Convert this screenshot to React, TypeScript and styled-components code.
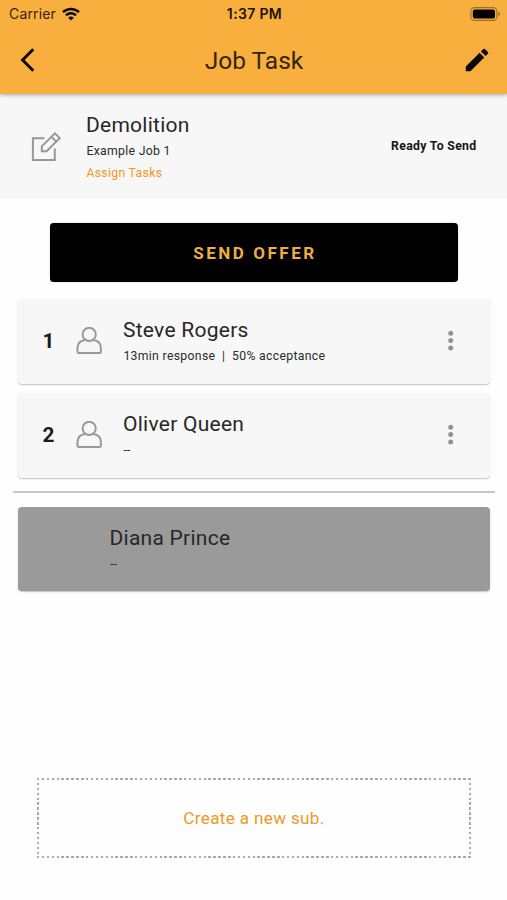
import React from 'react';
import styled, { createGlobalStyle } from 'styled-components';

const GlobalStyle = createGlobalStyle`
  * { box-sizing: border-box; }
  body { margin: 0; background: #fff; font-family: Roboto, sans-serif; color: #272727; }
  svg { display: block; flex: none; }
  button { border: 0; padding: 0; background: none; font: inherit; color: inherit; }
`;

const Screen = styled.div`
  display: flex;
  flex-direction: column;
  width: 507px;
  height: 900px;
  overflow: hidden;
  background: #fefefe;
`;

const Header = styled.header`
  height: 94px;
  flex: none;
  background: #f9af3e;
  box-shadow: 0 1px 4px rgba(0, 0, 0, 0.32);
  z-index: 1;
`;

const StatusBar = styled.div`
  display: grid;
  grid-template-columns: 1fr auto 1fr;
  align-items: center;
  height: 27px;
  padding: 0 6px 0 9px;
  font-family: Inter, sans-serif;
  font-size: 14px;
  color: #1b1407;
`;

const Carrier = styled.div`
  display: flex;
  align-items: center;
  gap: 6px;
  letter-spacing: 0.15px;
  color: #33250c;
`;

const Clock = styled.div`
  margin-right: 1px;
  font-weight: 600;
  letter-spacing: 0.35px;
`;

const Battery = styled.div`
  justify-self: end;
`;

const AppBar = styled.div`
  display: grid;
  grid-template-columns: 60px 1fr 60px;
  align-items: center;
  height: 66px;
`;

const BackButton = styled.button`
  padding-left: 20px;
`;

const EditButton = styled.button`
  padding-left: 15px;
`;

const Title = styled.h1`
  margin: 0;
  padding: 1px 0 0 1px;
  font-size: 24.5px;
  font-weight: 400;
  line-height: 30px;
  text-align: center;
  color: #33250c;
`;

const JobPanel = styled.section`
  display: flex;
  align-items: flex-start;
  height: 105px;
  flex: none;
  padding: 17px 30.5px 0 31px;
  background: #f7f7f7;
`;

const JobIcon = styled.div`
  width: 55px;
  padding-top: 20px;
`;

const TextBlock = styled.div`
  display: flex;
  flex-direction: column;
  flex: 1;
`;

const Name = styled.div`
  margin-bottom: 1px;
  font-size: 21px;
  line-height: 28px;
  letter-spacing: 0.26px;
`;

const Detail = styled.div<{ $accent?: boolean }>`
  padding-left: 0.4px;
  font-size: 12.25px;
  line-height: 22px;
  letter-spacing: 0.31px;
  white-space: pre;
  color: ${p => (p.$accent ? '#f0981f' : '#2b2b2b')};
`;

const Status = styled.div`
  padding-top: 24px;
  font-size: 12.25px;
  font-weight: 700;
  line-height: 22px;
  letter-spacing: 0.32px;
  color: #161616;
`;

const OfferButton = styled.button`
  height: 59px;
  flex: none;
  margin: 24px 49px 0 50px;
  padding: 0 0 0 2px;
  border-radius: 4px;
  background: #000;
  box-shadow: 0 0 1px rgba(0, 0, 0, 0.6);
  color: #efae43;
  font-size: 17px;
  font-weight: 700;
  letter-spacing: 2.55px;
`;

const List = styled.div`
  display: flex;
  flex-direction: column;
  gap: 9.5px;
  margin: 17px 17px 0 18px;
`;

const Card = styled.div<{ $muted?: boolean }>`
  display: flex;
  align-items: flex-start;
  height: 84.5px;
  padding-top: 17px;
  padding-left: ${p => (p.$muted ? '91.5px' : '18px')};
  border-radius: 4px;
  background: ${p => (p.$muted ? '#9a9a9a' : '#f7f7f7')};
  box-shadow: 0 1px 1.5px rgba(0, 0, 0, 0.24);
`;

const Rank = styled.div`
  width: 25px;
  padding-top: 11px;
  font-size: 20.8px;
  font-weight: 700;
  line-height: 28px;
  text-align: center;
  color: #1c1c1c;
`;

const Avatar = styled.div`
  width: 62px;
  padding: 11px 0 0 15px;
`;

const MenuButton = styled.button`
  width: 12px;
  margin-right: 33px;
  padding-top: 14px;
`;

const Divider = styled.hr`
  width: 482px;
  height: 2px;
  flex: none;
  margin: 13.5px 12px 13.5px 13px;
  border: 0;
  background: #c6c6c6;
`;

const SingleCard = styled(List)`
  margin-top: 0;
`;

const dash = '#a9a9a9 0 2.4px, transparent 2.4px 4.9px';

const CreateButton = styled.button`
  height: 80px;
  flex: none;
  margin: 187px 36px 0 37px;
  background:
    repeating-linear-gradient(90deg, ${dash}) top / 100% 2px no-repeat,
    repeating-linear-gradient(90deg, ${dash}) bottom / 100% 2px no-repeat,
    repeating-linear-gradient(180deg, ${dash}) left / 2px 100% no-repeat,
    repeating-linear-gradient(180deg, ${dash}) right / 2px 100% no-repeat;
  color: #ed991f;
  font-size: 17.1px;
  letter-spacing: 0.34px;
`;

const WifiIcon = () => (
  <svg width="18" height="14" viewBox="0 0 18 14">
    <g fill="none" stroke="#100b02" strokeWidth="2.5">
      <path d="M1 5.2 A11.4 11.4 0 0 1 17 5.2" />
      <path d="M4 8.3 A7.2 7.2 0 0 1 14 8.3" />
    </g>
    <path d="M9 13.6 L6.2 10.8 A4 4 0 0 1 11.8 10.8 Z" fill="#100b02" />
  </svg>
);

const BatteryIcon = () => (
  <svg width="31" height="14" viewBox="0 0 31 14">
    <rect x="0.9" y="0.6" width="26" height="12.8" rx="3.8" fill="none" stroke="#98702f" strokeWidth="1.1" />
    <rect x="2.8" y="2.5" width="22.2" height="9" rx="2" fill="#000" />
    <path d="M28.3 4.8 C30.6 5.6 30.6 8.4 28.3 9.2 Z" fill="#98702f" />
  </svg>
);

const BackIcon = () => (
  <svg width="16" height="24" viewBox="0 0 16 24">
    <path d="M13.3 1.3 L2.6 12 L13.3 22.7" fill="none" stroke="#0d0902" strokeWidth="3" />
  </svg>
);

const PencilIcon = () => (
  <svg width="30" height="30" viewBox="0 0 24 24">
    <path
      fill="#0d0902"
      d="M3 17.25V21h3.75L17.81 9.94l-3.75-3.75L3 17.25zM20.71 7.04a1 1 0 0 0 0-1.41l-2.34-2.34a1 1 0 0 0-1.41 0l-1.83 1.83 3.75 3.75 1.83-1.83z"
    />
  </svg>
);

const ComposeIcon = () => (
  <svg width="30" height="31" viewBox="0 0 30 31" fill="none" stroke="#989898" strokeWidth="2">
    <path d="M13.5 7.2 H1.9 V29.1 H23.8 V17.5" />
    <path d="M10.8 20.2 V15.4 L23.9 2.3 L28.7 7.1 L15.6 20.2 Z" />
    <path d="M20.4 5.8 L25.2 10.6" />
  </svg>
);

const PersonIcon = () => (
  <svg width="27" height="29" viewBox="0 0 27 29" fill="none" stroke="#999" strokeWidth="2">
    <circle cx="13.2" cy="7.4" r="6.6" />
    <path d="M9.2 12.9 C4.4 13.6 1.5 16.7 1.5 20.8 V24.5 Q1.5 26 3 26 H23.4 Q24.9 26 24.9 24.5 V20.8 C24.9 16.7 22 13.6 17.2 12.9" />
  </svg>
);

const DotsIcon = () => (
  <svg width="12" height="22" viewBox="0 0 12 22" fill="#929292">
    <circle cx="5.7" cy="3.2" r="2.5" />
    <circle cx="5.7" cy="10.6" r="2.5" />
    <circle cx="5.7" cy="18" r="2.5" />
  </svg>
);

const subs = [
  { name: 'Steve Rogers', detail: '13min response  |  50% acceptance' },
  { name: 'Oliver Queen', detail: '--' },
];

export default function App() {
  return (
    <Screen>
      <GlobalStyle />
      <Header>
        <StatusBar>
          <Carrier>Carrier <WifiIcon /></Carrier>
          <Clock>1:37 PM</Clock>
          <Battery><BatteryIcon /></Battery>
        </StatusBar>
        <AppBar>
          <BackButton aria-label="Back"><BackIcon /></BackButton>
          <Title>Job Task</Title>
          <EditButton aria-label="Edit"><PencilIcon /></EditButton>
        </AppBar>
      </Header>
      <JobPanel>
        <JobIcon><ComposeIcon /></JobIcon>
        <TextBlock>
          <Name>Demolition</Name>
          <Detail>Example Job 1</Detail>
          <Detail $accent>Assign Tasks</Detail>
        </TextBlock>
        <Status>Ready To Send</Status>
      </JobPanel>
      <OfferButton>SEND OFFER</OfferButton>
      <List>
        {subs.map((sub, i) => (
          <Card key={sub.name}>
            <Rank>{i + 1}</Rank>
            <Avatar><PersonIcon /></Avatar>
            <TextBlock>
              <Name>{sub.name}</Name>
              <Detail>{sub.detail}</Detail>
            </TextBlock>
            <MenuButton aria-label="More"><DotsIcon /></MenuButton>
          </Card>
        ))}
      </List>
      <Divider />
      <SingleCard>
        <Card $muted>
          <TextBlock>
            <Name>Diana Prince</Name>
            <Detail>--</Detail>
          </TextBlock>
        </Card>
      </SingleCard>
      <CreateButton>Create a new sub.</CreateButton>
    </Screen>
  );
}
